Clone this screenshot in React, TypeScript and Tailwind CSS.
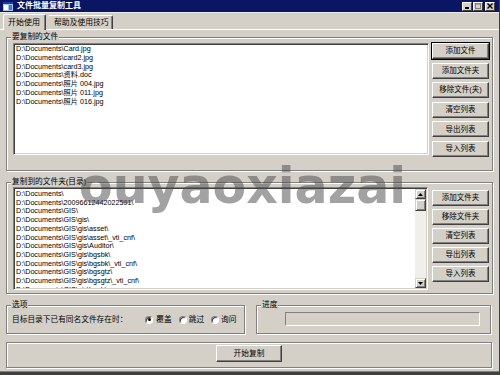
import React from "react";

const files = [
  "D:\\Documents\\Card.jpg",
  "D:\\Documents\\card2.jpg",
  "D:\\Documents\\card3.jpg",
  "D:\\Documents\\资料.doc",
  "D:\\Documents\\照片 004.jpg",
  "D:\\Documents\\照片 011.jpg",
  "D:\\Documents\\照片 016.jpg",
];

const folders = [
  "D:\\Documents\\",
  "D:\\Documents\\20096612442022591\\",
  "D:\\Documents\\GIS\\",
  "D:\\Documents\\GIS\\gis\\",
  "D:\\Documents\\GIS\\gis\\asset\\",
  "D:\\Documents\\GIS\\gis\\asset\\_vti_cnf\\",
  "D:\\Documents\\GIS\\gis\\Auditor\\",
  "D:\\Documents\\GIS\\gis\\bgsbk\\",
  "D:\\Documents\\GIS\\gis\\bgsbk\\_vti_cnf\\",
  "D:\\Documents\\GIS\\gis\\bgsgtz\\",
  "D:\\Documents\\GIS\\gis\\bgsgtz\\_vti_cnf\\",
  "D:\\Documents\\GIS\\gis\\bgsh\\",
];

function Btn({ label, def }: { label: string; def?: boolean }) {
  return (
    <div
      className={
        "flex items-center justify-center h-[16px] w-[57px] shrink-0 text-[7.5px] leading-none text-black bg-[#d4d0c8] border border-t-white border-l-white border-r-[#404040] border-b-[#404040] shadow-[inset_-1px_-1px_0_#808080] " +
        (def ? "outline outline-1 outline-black" : "")
      }
    >
      {label}
    </div>
  );
}

function Group({
  label,
  className,
  children,
}: {
  label?: string;
  className: string;
  children?: React.ReactNode;
}) {
  return (
    <div
      className={
        "relative border border-[#808080] shadow-[1px_1px_0_#fff,inset_1px_1px_0_#fff] " +
        className
      }
    >
      {label && (
        <span className="absolute left-[4px] -top-[6px] bg-[#d4d0c8] pl-[1px] pr-[1px] text-[7.7px] leading-[10px] text-black">
          {label}
        </span>
      )}
      {children}
    </div>
  );
}

function Radio({ checked }: { checked?: boolean }) {
  return (
    <div className="w-[8px] h-[8px] rounded-full bg-white border border-t-[#808080] border-l-[#808080] border-r-white border-b-white shadow-[inset_1px_1px_0_#404040] flex items-center justify-center">
      {checked && <div className="w-[3px] h-[3px] rounded-full bg-black" />}
    </div>
  );
}

function Arrow({ up }: { up?: boolean }) {
  return (
    <div className="w-[11px] h-[10px] bg-[#d4d0c8] border border-t-[#d4d0c8] border-l-[#d4d0c8] border-r-[#404040] border-b-[#404040] shadow-[inset_1px_1px_0_#fff,inset_-1px_-1px_0_#808080] flex items-center justify-center">
      <svg width="5" height="3" viewBox="0 0 5 3">
        {up ? (
          <polygon points="2.5,0 5,3 0,3" fill="#000" />
        ) : (
          <polygon points="0,0 5,0 2.5,3" fill="#000" />
        )}
      </svg>
    </div>
  );
}

function CtrlBtn({ children }: { children: React.ReactNode }) {
  return (
    <div className="w-[10px] h-[9px] bg-[#d4d0c8] border border-t-white border-l-white border-r-[#404040] border-b-[#404040] flex items-center justify-center">
      {children}
    </div>
  );
}

export default function App() {
  return (
    <div className="relative w-[500px] h-[375px] overflow-hidden bg-[#d4d0c8] border-r border-[#404040] flex flex-col font-['Liberation_Sans','Noto_Sans_CJK_SC',sans-serif] text-black">
      {/* title bar */}
      <div className="h-[12px] shrink-0 bg-[#0a1664] flex items-center pl-[3px] pr-[4px]">
        <svg width="10" height="9" viewBox="0 0 10 9" className="shrink-0">
          <rect x="0" y="0" width="10" height="9" fill="#9cc4ec" />
          <rect x="0" y="0" width="10" height="2" fill="#1c3c9c" />
          <rect x="1" y="3" width="4" height="5" fill="#ffffff" />
          <rect x="6" y="3" width="3" height="5" fill="#4878c8" />
        </svg>
        <span className="ml-[4px] text-[8px] leading-none font-bold text-white">
          文件批量复制工具
        </span>
        <div className="ml-auto flex items-center">
          <CtrlBtn>
            <svg width="5" height="5" viewBox="0 0 5 5">
              <rect x="0" y="3" width="4" height="2" fill="#000" />
            </svg>
          </CtrlBtn>
          <div className="ml-[1px]">
            <CtrlBtn>
              <svg width="6" height="6" viewBox="0 0 6 6">
                <rect x="0.5" y="0.5" width="5" height="5" fill="none" stroke="#808080" />
                <rect x="0" y="0" width="6" height="1.5" fill="#808080" />
              </svg>
            </CtrlBtn>
          </div>
          <div className="ml-[2px]">
            <CtrlBtn>
              <svg width="6" height="6" viewBox="0 0 6 6">
                <path d="M0.5 0.5 L5.5 5.5 M5.5 0.5 L0.5 5.5" stroke="#000" strokeWidth="1.4" />
              </svg>
            </CtrlBtn>
          </div>
        </div>
      </div>
      <div className="h-[1px] shrink-0 bg-[#ecebe6]" />

      {/* tabs */}
      <div className="relative z-10 h-[16px] shrink-0 flex items-end pl-[3px]">
        <div className="h-[16px] w-[43px] -mb-[1px] bg-[#d4d0c8] border-l border-t border-white border-r border-r-[#404040] shadow-[inset_-1px_0_0_#808080] rounded-t-[2px] flex items-center pl-[4px] text-[8px] leading-none">
          开始使用
        </div>
        <div className="ml-[2px] h-[14px] w-[65px] border-t border-white border-r border-r-[#404040] shadow-[inset_-1px_0_0_#808080] rounded-t-[2px] flex items-center pl-[6px] text-[7.8px] leading-none">
          帮助及使用技巧
        </div>
      </div>

      {/* panel */}
      <div className="flex flex-col border-t border-white">
        <Group label="要复制的文件" className="mt-[7px] ml-[6px] w-[487px] h-[134px] pt-[5px] pl-[6px] flex items-start">
          <div className="w-[416px] h-[112px] bg-white border border-t-[#808080] border-l-[#808080] border-b-white border-r-white shadow-[inset_1px_1px_0_#404040,inset_-1px_-1px_0_#d4d0c8] pl-[2px] pt-[1px] overflow-hidden">
            {files.map((f) => (
              <div key={f} className="text-[7.2px] leading-[8.8px] whitespace-nowrap">
                {f}
              </div>
            ))}
          </div>
          <div className="ml-[3px] flex flex-col gap-[3.6px]">
            <Btn label="添加文件" def />
            <Btn label="添加文件夹" />
            <Btn label="移除文件(夹)" />
            <Btn label="清空列表" />
            <Btn label="导出列表" />
            <Btn label="导入列表" />
          </div>
        </Group>

        <Group label="复制到的文件夹(目录)" className="mt-[11px] ml-[6px] w-[487px] h-[112px] pt-[4px] pl-[6px] flex items-start">
          <div className="w-[415px] h-[103px] bg-white border border-t-[#808080] border-l-[#808080] border-b-white border-r-white shadow-[inset_1px_1px_0_#404040,inset_-1px_-1px_0_#d4d0c8] p-[1px] flex overflow-hidden">
            <div className="flex-1 pl-[1px] pt-[1px] overflow-hidden">
              {folders.map((f) => (
                <div key={f} className="text-[7.2px] leading-[8.7px] whitespace-nowrap">
                  {f}
                </div>
              ))}
            </div>
            <div className="w-[11px] h-full bg-[#f0efea] flex flex-col">
              <Arrow up />
              <div className="w-[11px] h-[12px] bg-[#d4d0c8] border border-t-[#d4d0c8] border-l-[#d4d0c8] border-r-[#404040] border-b-[#404040] shadow-[inset_1px_1px_0_#fff,inset_-1px_-1px_0_#808080]" />
              <div className="flex-1" />
              <Arrow />
            </div>
          </div>
          <div className="ml-[4px] mt-[3px] flex flex-col gap-[3px]">
            <Btn label="添加文件夹" />
            <Btn label="移除文件夹" />
            <Btn label="清空列表" />
            <Btn label="导出列表" />
            <Btn label="导入列表" />
          </div>
        </Group>

        <div className="mt-[11px] flex">
          <Group label="选项" className="ml-[6px] w-[239px] h-[29px] pl-[5px] flex items-center text-[7.7px] leading-none">
            <span>目标目录下已有同名文件存在时：</span>
            <div className="ml-[18px] flex items-center">
              <Radio checked />
              <span className="ml-[3px]">覆盖</span>
            </div>
            <div className="ml-[7px] flex items-center">
              <Radio />
              <span className="ml-[2px]">跳过</span>
            </div>
            <div className="ml-[7px] flex items-center">
              <Radio />
              <span className="ml-[2px]">询问</span>
            </div>
          </Group>
          <Group label="进度" className="ml-[11px] w-[235px] h-[29px] pl-[28px] pt-[6px]">
            <div className="w-[195px] h-[14px] border border-t-[#808080] border-l-[#808080] border-b-white border-r-white bg-[#d4d0c8]" />
          </Group>
        </div>

        <Group className="mt-[8px] ml-[6px] w-[486px] h-[26px] pt-[2px] flex justify-center">
          <div className="h-[17px] w-[66px] flex items-center justify-center text-[7.7px] leading-none bg-[#d4d0c8] border border-t-white border-l-white border-r-[#404040] border-b-[#404040] shadow-[inset_-1px_-1px_0_#808080]">
            开始复制
          </div>
        </Group>
      </div>

      <div className="mt-auto h-[4px] shrink-0 border-t border-[#808080] bg-[#404040]" />

      {/* watermark */}
      <div className="pointer-events-none absolute left-[79px] top-[162px] font-['DejaVu_Sans',sans-serif] text-[49px] leading-none font-bold text-[rgba(70,70,70,0.5)] whitespace-nowrap">
        ouyaoxiazai
      </div>
    </div>
  );
}
